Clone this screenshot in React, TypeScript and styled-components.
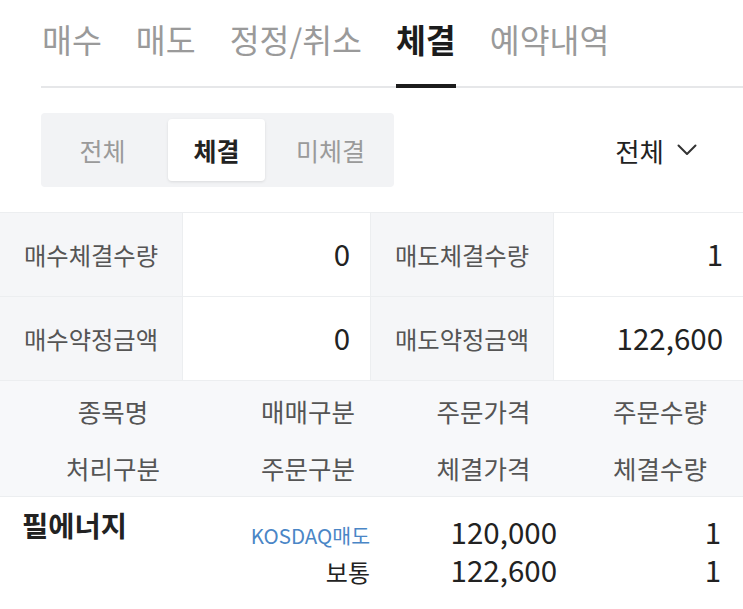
import React from "react";
import styled, { createGlobalStyle } from "styled-components";

const GlobalStyle = createGlobalStyle`
  body {
    margin: 0;
    background: #ffffff;
    font-family: "Noto Sans CJK KR", "Noto Sans", sans-serif;
    color: #222222;
  }
`;

const Page = styled.div`
  width: 743px;
  height: 609px;
  overflow: hidden;
  background: #ffffff;
`;

const TabBar = styled.div`
  display: flex;
  gap: 34px;
  margin-left: 41px;
  padding-left: 1px;
  border-bottom: 2px solid #e6e7e9;
`;

const Tab = styled.div<{ $active?: boolean }>`
  font-size: 32.5px;
  line-height: 46px;
  padding: 16px 0 22px;
  margin-bottom: -2px;
  border-bottom: 4px solid ${(p) => (p.$active ? "#1c1c1c" : "transparent")};
  color: ${(p) => (p.$active ? "#1c1c1c" : "#9a9a9a")};
  font-weight: ${(p) => (p.$active ? 700 : 400)};
  white-space: nowrap;
`;

const FilterRow = styled.div`
  display: flex;
  align-items: center;
  justify-content: space-between;
  margin: 25px 46px 0 41px;
`;

const Segment = styled.div`
  display: flex;
  gap: 17px;
  padding: 6px 15px 6px 13px;
  background: #f2f3f5;
  border-radius: 4px;
`;

const SegItem = styled.div<{ $active?: boolean }>`
  width: 97px;
  height: 62px;
  display: flex;
  align-items: center;
  justify-content: center;
  font-size: 25px;
  border-radius: 4px;
  color: ${(p) => (p.$active ? "#222222" : "#9a9a9a")};
  font-weight: ${(p) => (p.$active ? 700 : 400)};
  background: ${(p) => (p.$active ? "#ffffff" : "transparent")};
  box-shadow: ${(p) => (p.$active ? "0 1px 3px rgba(0,0,0,0.1)" : "none")};
`;

const Select = styled.div`
  display: flex;
  align-items: center;
  gap: 13px;
  font-size: 26.5px;
  color: #222222;
`;

const Summary = styled.div`
  margin-top: 25px;
  display: grid;
  grid-template-columns: 182px 187px 182px 1fr;
  grid-auto-rows: 83px;
  gap: 1px;
  background: #eceef0;
  border-top: 1px solid #eceef0;
  border-bottom: 1px solid #eceef0;
`;

const SumLabel = styled.div`
  display: flex;
  align-items: center;
  justify-content: center;
  background: #f5f6f8;
  font-size: 24.3px;
  color: #555555;
`;

const SumValue = styled.div`
  display: flex;
  align-items: center;
  justify-content: flex-end;
  padding: 0 20px 3px 0;
  background: #ffffff;
  font-size: 29.5px;
  color: #222222;
`;

const Columns = "226px 164px 187px 1fr";

const HeadGrid = styled.div`
  display: grid;
  grid-template-columns: ${Columns};
  grid-auto-rows: 57px;
  padding-top: 1px;
  background: #f7f8fa;
  border-bottom: 1px solid #eceef0;
`;

const HeadCell = styled.div`
  display: flex;
  align-items: center;
  justify-content: center;
  font-size: 25.5px;
  color: #555555;
`;

const DataGrid = styled.div`
  display: grid;
  grid-template-columns: ${Columns};
  grid-template-rows: 41px 38px;
  align-items: end;
  padding-top: 11px;
`;

const Cell = styled.div<{ $blue?: boolean }>`
  text-align: right;
  padding-right: 20px;
  font-size: ${(p) => (p.$blue ? "20.5px" : "24px")};
  line-height: 1.3;
  color: ${(p) => (p.$blue ? "#4a86c6" : "#222222")};
`;

const NumCell = styled(Cell)`
  font-size: 29.5px;
  line-height: 1.2;
`;

const LastCell = styled(NumCell)`
  padding-right: 22px;
`;

const Name = styled.div`
  align-self: start;
  grid-row: 1 / span 2;
  padding-left: 22px;
  font-size: 28.5px;
  font-weight: 700;
  line-height: 34px;
  color: #222222;
`;

const Chevron = () => (
  <svg width="20" height="12" viewBox="0 0 20 12" fill="none">
    <path d="M1.5 1.5 L10 10 L18.5 1.5" stroke="#333" strokeWidth="2" strokeLinecap="round" strokeLinejoin="round" />
  </svg>
);

const tabs = ["매수", "매도", "정정/취소", "체결", "예약내역"];
const segs = ["전체", "체결", "미체결"];
const heads = ["종목명", "매매구분", "주문가격", "주문수량", "처리구분", "주문구분", "체결가격", "체결수량"];

export default function App() {
  return (
    <Page>
      <GlobalStyle />
      <TabBar>
        {tabs.map((t) => (
          <Tab key={t} $active={t === "체결"}>
            {t}
          </Tab>
        ))}
      </TabBar>

      <FilterRow>
        <Segment>
          {segs.map((s) => (
            <SegItem key={s} $active={s === "체결"}>
              {s}
            </SegItem>
          ))}
        </Segment>
        <Select>
          전체
          <Chevron />
        </Select>
      </FilterRow>

      <Summary>
        <SumLabel>매수체결수량</SumLabel>
        <SumValue>0</SumValue>
        <SumLabel>매도체결수량</SumLabel>
        <SumValue>1</SumValue>
        <SumLabel>매수약정금액</SumLabel>
        <SumValue>0</SumValue>
        <SumLabel>매도약정금액</SumLabel>
        <SumValue>122,600</SumValue>
      </Summary>

      <HeadGrid>
        {heads.map((h) => (
          <HeadCell key={h}>{h}</HeadCell>
        ))}
      </HeadGrid>

      <DataGrid>
        <Name>필에너지</Name>
        <Cell $blue>KOSDAQ매도</Cell>
        <NumCell>120,000</NumCell>
        <LastCell>1</LastCell>
        <Cell>보통</Cell>
        <NumCell>122,600</NumCell>
        <LastCell>1</LastCell>
      </DataGrid>
    </Page>
  );
}
